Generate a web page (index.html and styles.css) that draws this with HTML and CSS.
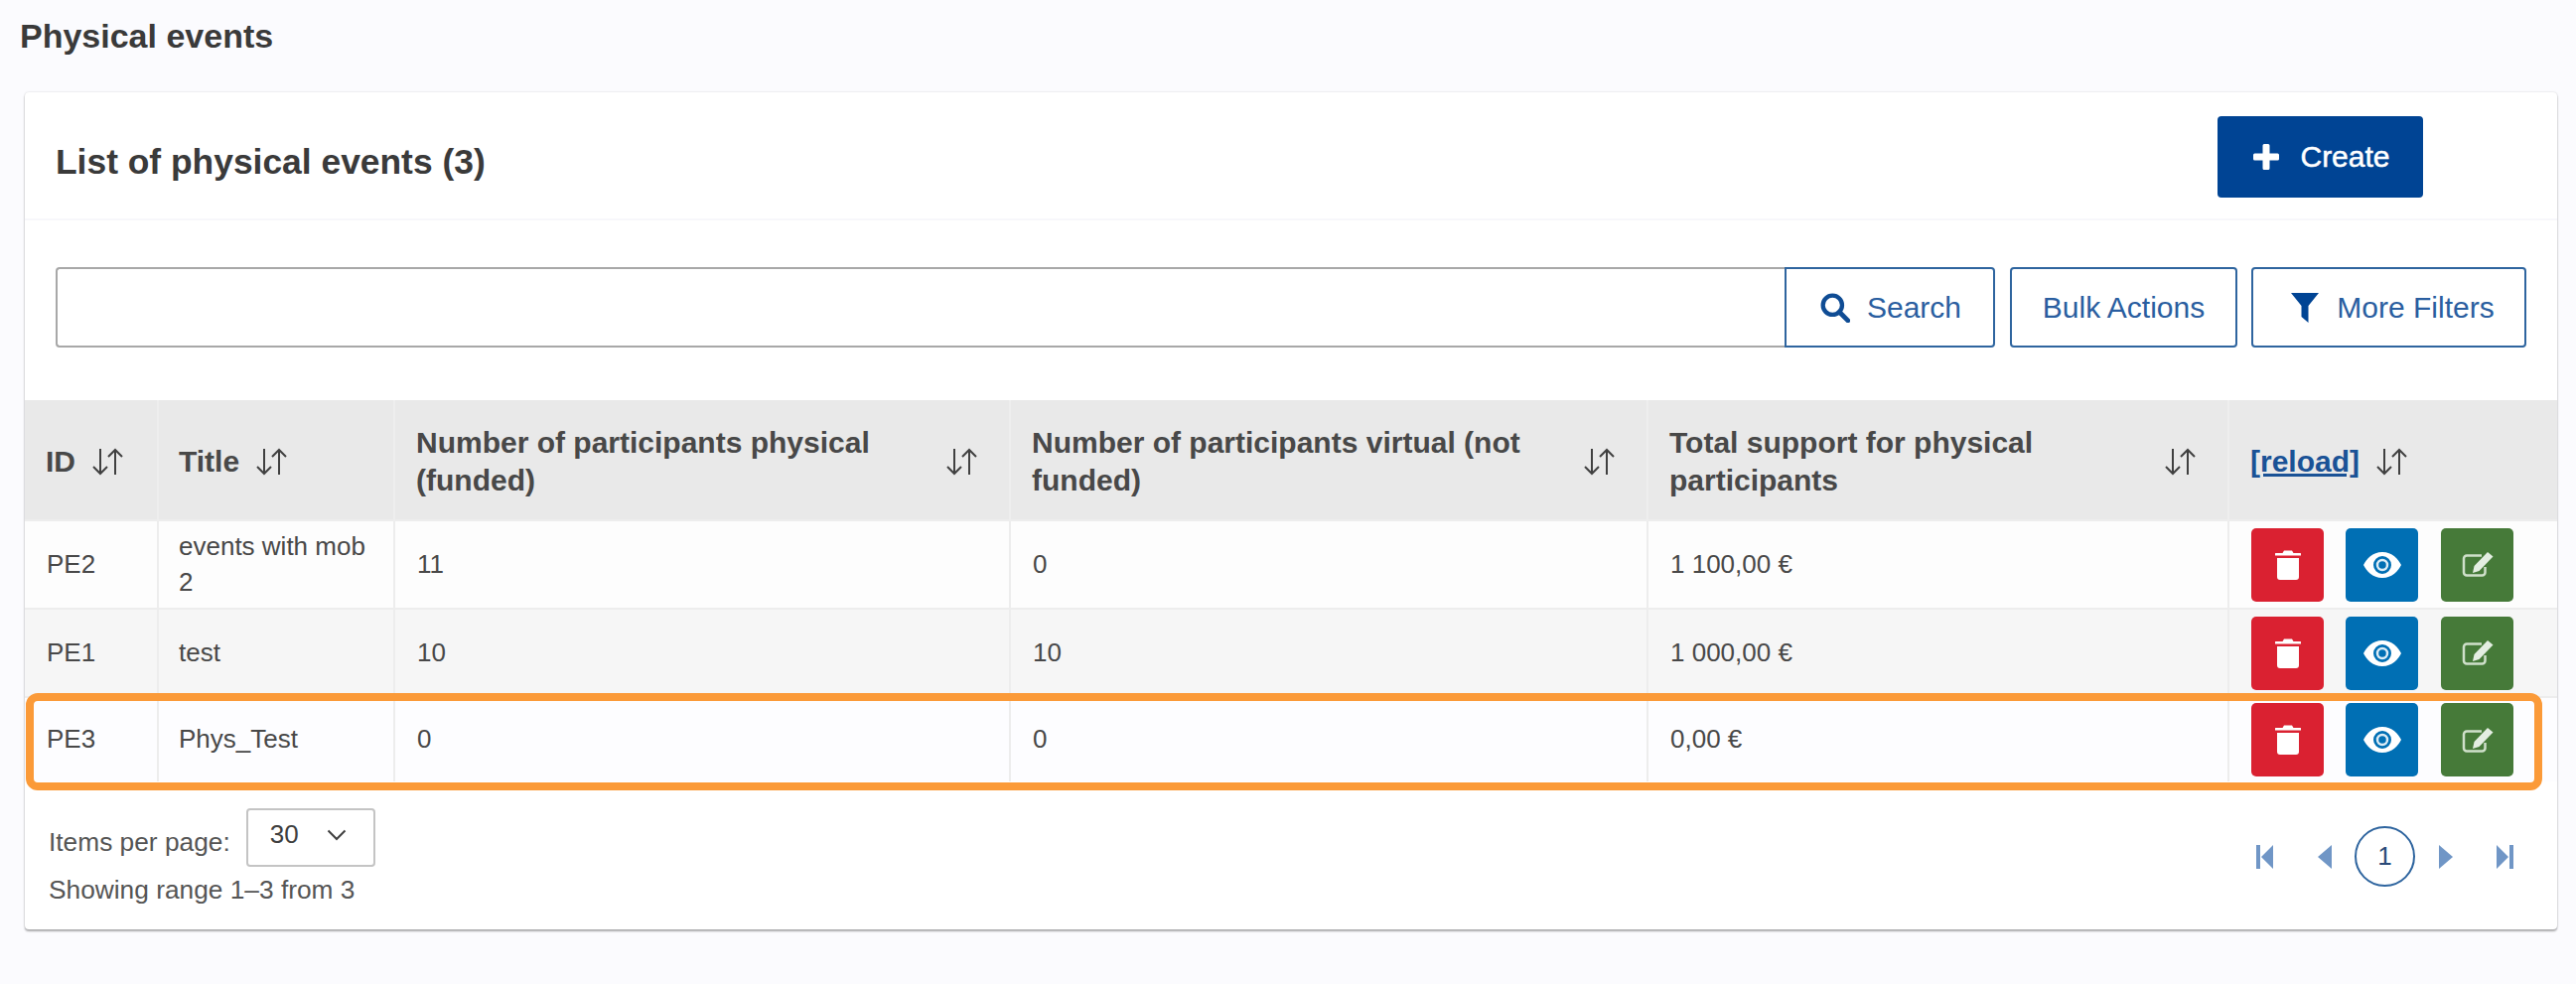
FILE: index.html
```html
<!DOCTYPE html>
<html lang="en">
<head>
<meta charset="utf-8">
<title>Physical events</title>
<link rel="stylesheet" href="styles.css">
</head>
<body>
<svg class="defs" width="0" height="0" aria-hidden="true">
  <symbol id="sort" viewBox="0 0 34 28"><path d="M9 1v25M2 19l7 7 7-7M24 27V2M17 9l7-7 7 7" fill="none" stroke="currentColor" stroke-width="2"/></symbol>
  <symbol id="trash" viewBox="0 0 26 30"><path d="M9 0.5h8l1.500 2.500H25.500a0.500 0.500 0 0 1 .5.5V5.500H0V3.500a0.500 0.500 0 0 1 .5-.5H7.500zM2 8h22v19a3 3 0 0 1-3 3H5a3 3 0 0 1-3-3z" fill="#fff"/></symbol>
  <symbol id="eye" viewBox="0 0 38 26"><path fill-rule="evenodd" d="M19 0C29 0 35 7 38 13 35 19 29 26 19 26 9 26 3 19 0 13 3 7 9 0 19 0zM19 4A9 9 0 1 0 19 22 9 9 0 1 0 19 4z" fill="#fff"/><circle cx="19" cy="13" r="5" fill="none" stroke="#dcecf6" stroke-width="2.500"/></symbol>
  <symbol id="edit" viewBox="0 0 32 25"><path d="M23.500 15v5.500a3 3 0 0 1-3 3H5a3 3 0 0 1-3-3V6.500a3 3 0 0 1 3-3h15" fill="none" stroke="#cfe0ca" stroke-width="2.500"/><path d="M26 0l5.500 4.500L17.500 19l-6.500 2L12.500 14z" fill="#e4eee2"/></symbol>
</svg>

<h1 class="page-title">Physical events</h1>

<section class="card">
  <header class="card-head">
    <h2 class="card-title">List of physical events (3)</h2>
    <button class="btn-create" type="button">
      <svg class="ico-plus" viewBox="0 0 28 28"><path d="M10.500 2.500A1.500 1.500 0 0 1 12 1h4a1.500 1.500 0 0 1 1.500 1.500v8h8A1.500 1.500 0 0 1 27 12v4a1.500 1.500 0 0 1-1.500 1.500h-8v8A1.500 1.500 0 0 1 16 27h-4a1.500 1.500 0 0 1-1.500-1.500v-8h-8A1.500 1.500 0 0 1 1 16v-4a1.500 1.500 0 0 1 1.500-1.500h8z" fill="#fff"/></svg>
      <span>Create</span>
    </button>
  </header>

  <div class="toolbar">
    <div class="search-input"></div>
    <button class="btn-outline btn-search" type="button">
      <svg class="ico-search" viewBox="0 0 28 28"><circle cx="11.500" cy="11.500" r="9" fill="none" stroke="currentColor" stroke-width="4"/><path d="M18 18l8 8" stroke="currentColor" stroke-width="4.500" stroke-linecap="round"/></svg>
      <span>Search</span>
    </button>
    <button class="btn-outline btn-bulk" type="button"><span>Bulk Actions</span></button>
    <button class="btn-outline btn-filter" type="button">
      <svg class="ico-filter" viewBox="0 0 28 30"><path d="M0 0h28L17.500 13v17L10.500 24V13z" fill="currentColor"/></svg>
      <span>More Filters</span>
    </button>
  </div>

  <table class="data">
    <colgroup>
      <col class="c-id"><col class="c-title"><col class="c-phys"><col class="c-virt"><col class="c-total"><col class="c-act">
    </colgroup>
    <thead>
      <tr>
        <th><div class="th-inner tight"><span>ID</span><svg class="sort"><use href="#sort"/></svg></div></th>
        <th class="th-title"><div class="th-inner tight"><span>Title</span><svg class="sort"><use href="#sort"/></svg></div></th>
        <th><div class="th-inner"><span>Number of participants physical (funded)</span><svg class="sort"><use href="#sort"/></svg></div></th>
        <th><div class="th-inner"><span>Number of participants virtual (not funded)</span><svg class="sort"><use href="#sort"/></svg></div></th>
        <th><div class="th-inner"><span>Total support for physical participants</span><svg class="sort"><use href="#sort"/></svg></div></th>
        <th><div class="th-inner tight"><a class="reload" href="#">[reload]</a><svg class="sort"><use href="#sort"/></svg></div></th>
      </tr>
    </thead>
    <tbody>
      <tr class="r1">
        <td>PE2</td><td class="td-title">events with mob 2</td><td>11</td><td>0</td><td>1 100,00 €</td>
        <td class="actions"><div class="act-row">
          <button class="act red" type="button" aria-label="Delete"><svg class="i-trash"><use href="#trash"/></svg></button>
          <button class="act blue" type="button" aria-label="View"><svg class="i-eye"><use href="#eye"/></svg></button>
          <button class="act green" type="button" aria-label="Edit"><svg class="i-edit"><use href="#edit"/></svg></button>
        </div></td>
      </tr>
      <tr class="r2">
        <td>PE1</td><td class="td-title">test</td><td>10</td><td>10</td><td>1 000,00 €</td>
        <td class="actions"><div class="act-row">
          <button class="act red" type="button" aria-label="Delete"><svg class="i-trash"><use href="#trash"/></svg></button>
          <button class="act blue" type="button" aria-label="View"><svg class="i-eye"><use href="#eye"/></svg></button>
          <button class="act green" type="button" aria-label="Edit"><svg class="i-edit"><use href="#edit"/></svg></button>
        </div></td>
      </tr>
      <tr class="r3">
        <td>PE3</td><td class="td-title">Phys_Test</td><td>0</td><td>0</td><td>0,00 €</td>
        <td class="actions"><div class="act-row">
          <button class="act red" type="button" aria-label="Delete"><svg class="i-trash"><use href="#trash"/></svg></button>
          <button class="act blue" type="button" aria-label="View"><svg class="i-eye"><use href="#eye"/></svg></button>
          <button class="act green" type="button" aria-label="Edit"><svg class="i-edit"><use href="#edit"/></svg></button>
        </div></td>
      </tr>
    </tbody>
  </table>

  <footer class="card-foot">
    <div class="foot-left">
      <div class="per-page">
        <span class="per-label">Items per page:</span>
        <div class="select"><span>30</span><svg class="chev" viewBox="0 0 20 12"><path d="M1.500 1.500L10 10l8.500-8.500" fill="none" stroke="#404040" stroke-width="2"/></svg></div>
      </div>
      <div class="range">Showing range 1–3 from 3</div>
    </div>
    <nav class="pager">
      <svg class="pg pg-edge" viewBox="0 0 17 24"><path d="M0 0h4v24H0zM17 0v24L5 12z" fill="currentColor"/></svg>
      <svg class="pg pg-step" viewBox="0 0 14 24"><path d="M14 0v24L0 12z" fill="currentColor"/></svg>
      <span class="pg-num">1</span>
      <svg class="pg pg-step" viewBox="0 0 14 24"><path d="M0 0v24L14 12z" fill="currentColor"/></svg>
      <svg class="pg pg-edge" viewBox="0 0 17 24"><path d="M13 0h4v24h-4zM0 0v24L12 12z" fill="currentColor"/></svg>
    </nav>
  </footer>

  <div class="highlight"></div>
</section>
</body>
</html>
```

FILE: styles.css
```css
* { box-sizing: border-box; }
html, body { margin: 0; padding: 0; }
body {
  width: 2594px;
  height: 991px;
  overflow: hidden;
  background: #fbfbfe;
  color: #404040;
  font-family: "Liberation Sans", Arial, sans-serif;
}
.defs { position: absolute; }

.page-title {
  margin: 0;
  height: 93px;
  padding: 16px 0 0 20px;
  font-size: 34px;
  line-height: 40px;
  font-weight: 700;
  color: #3a3a3a;
}

.card {
  position: relative;
  width: 2550px;
  height: 843px;
  margin-left: 25px;
  background: #fff;
  border-radius: 4px;
  box-shadow: 0 0 2px rgba(0,0,0,.18), 0 2px 2px rgba(0,0,0,.3);
}

.card-head {
  height: 129px;
  padding: 24px 135px 0 31px;
  display: flex;
  justify-content: space-between;
  align-items: flex-start;
  border-bottom: 2px solid #f7f7fb;
}
.card-title {
  margin: 0;
  padding-top: 25px;
  font-size: 35.400px;
  line-height: 42px;
  font-weight: 700;
  color: #3a3a3a;
}
.btn-create {
  width: 207px;
  height: 82px;
  padding: 0 0 0 2px;
  display: flex;
  align-items: center;
  justify-content: center;
  gap: 20px;
  background: #004494;
  color: #fff;
  border: 0;
  border-radius: 4px;
  font: 400 30px "Liberation Sans", Arial, sans-serif;
  -webkit-text-stroke: .5px #fff;
}
.ico-plus { width: 28px; height: 28px; }

.toolbar {
  height: 181px;
  padding: 47px 31px 0 31px;
  display: flex;
  align-items: flex-start;
}
.search-input {
  width: 1741px;
  height: 81px;
  border: 2px solid #a8a8a8;
  border-right: 0;
  border-radius: 4px 0 0 4px;
  background: #fff;
}
.btn-outline {
  height: 81px;
  display: flex;
  align-items: center;
  justify-content: center;
  background: #fff;
  color: #2a5ea0;
  border: 2px solid #2f659f;
  border-radius: 4px;
  font: 400 30px "Liberation Sans", Arial, sans-serif;
}
.btn-search { width: 212px; gap: 17px; padding-left: 8px; border-radius: 0 4px 4px 0; }
.btn-bulk { width: 229px; margin-left: 15px; }
.btn-filter { width: 277px; margin-left: 14px; gap: 18px; padding-left: 14px; }
.ico-search { width: 30px; height: 30px; color: #0f4c94; }
.ico-filter { width: 28px; height: 30px; color: #004494; }

.data {
  width: 2550px;
  table-layout: fixed;
  border-collapse: collapse;
}
.c-id { width: 134px; }
.c-title { width: 238px; }
.c-phys { width: 620px; }
.c-virt { width: 642px; }
.c-total { width: 585px; }
.c-act { width: 331px; }

.data th {
  height: 121px;
  padding: 3px 30px 0 21px;
  background: #e9e9e9;
  border-left: 2px solid #eeeeee;
  text-align: left;
  font-size: 30px;
  font-weight: 700;
  line-height: 38px;
  color: #484848;
}
.data th:first-child, .data td:first-child { border-left: 0; }
.data .th-title { padding-left: 20px; }
.th-inner { display: flex; align-items: center; justify-content: space-between; gap: 20px; }
.th-inner.tight { justify-content: flex-start; gap: 16px; }
.sort { width: 34px; height: 28px; flex: none; color: #404040; }
.reload { color: #1a5296; text-decoration: underline; font-weight: 700; }

.data td {
  padding: 0 22px 2px;
  border-left: 2px solid #ededed;
  border-top: 2px solid #ededed;
  font-size: 26px;
  line-height: 36px;
  color: #484848;
  vertical-align: middle;
}
.data .td-title { padding-left: 20px; }
.r1 td { height: 89px; background: #fdfdfd; }
.r2 td { height: 89px; background: #f6f6f6; }
.r3 td { height: 85px; background: #fdfdff; }
.data td.actions { padding: 0 0 0 22px; }
.act-row { display: flex; gap: 22px; }
.act {
  width: 73px;
  height: 74px;
  padding: 0;
  display: flex;
  align-items: center;
  justify-content: center;
  border: 0;
  border-radius: 5px;
}
.red { background: #da2131; }
.blue { background: #006fb4; }
.green { background: #467a39; margin-left: 1px; }
.i-trash { width: 26px; height: 30px; }
.i-eye { width: 38px; height: 26px; }
.i-edit { width: 32px; height: 25px; }

.card-foot {
  display: flex;
  justify-content: space-between;
  padding: 27px 44px 0 24px;
}
.per-page {
  display: flex;
  align-items: flex-start;
  gap: 16px;
  font-size: 26.300px;
  color: #555;
}
.per-label { margin-top: 16px; line-height: 36px; }
.select {
  width: 130px;
  height: 59px;
  display: flex;
  align-items: center;
  gap: 28px;
  padding: 0 0 6px 22px;
  border: 2px solid #c4c4c4;
  border-radius: 4px;
  font-size: 26px;
  color: #404040;
}
.chev { width: 20px; height: 12px; }
.range {
  margin-top: 5px;
  font-size: 26.300px;
  line-height: 36px;
  color: #555;
}
.pager {
  display: flex;
  align-items: center;
  height: 61px;
  margin-top: 18px;
  color: #7096c6;
}
.pg-edge { width: 17px; height: 24px; }
.pg-step { width: 14px; height: 24px; }
.pager .pg-step:nth-child(2) { margin: 0 23px 0 45px; }
.pager .pg-step:nth-child(4) { margin: 0 44px 0 24px; }
.pg-num {
  width: 61px;
  height: 61px;
  display: flex;
  align-items: center;
  justify-content: center;
  border: 2px solid #2f659f;
  border-radius: 50%;
  font-size: 26px;
  color: #2a4a78;
}

.highlight {
  position: absolute;
  left: 1px;
  top: 605px;
  width: 2534px;
  height: 98px;
  border: 8px solid #fb9a38;
  border-radius: 12px;
  pointer-events: none;
}
```
